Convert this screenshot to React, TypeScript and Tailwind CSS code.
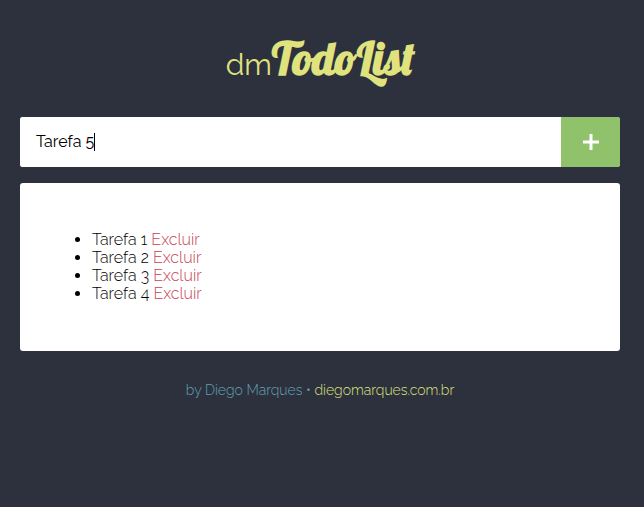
import { useState } from "react";
import type { FormEvent } from "react";

const initialTasks = ["Tarefa 1", "Tarefa 2", "Tarefa 3", "Tarefa 4"];

export default function App() {
  const [tasks, setTasks] = useState<string[]>(initialTasks);
  const [text, setText] = useState("Tarefa 5");

  function addTask(event: FormEvent) {
    event.preventDefault();
    if (!text.trim()) return;
    setTasks([...tasks, text.trim()]);
    setText("");
  }

  return (
    <div className="min-h-screen bg-[#2d313d] pt-8 pr-6 pb-8 pl-5 font-['Raleway',Lato,sans-serif] text-base text-black">
      <header className="flex justify-center">
        <h1 className="flex items-baseline text-[#dfe27d]">
          <span className="text-[30px] leading-none font-normal">dm</span>
          <span className="font-['Lobster','Liberation_Serif',serif] text-[44px] leading-[53px] font-bold">
            TodoList
          </span>
        </h1>
      </header>

      <main className="mt-8">
        <form onSubmit={addTask} className="flex h-[50px] overflow-hidden rounded-[3px] bg-white">
          <div className="relative flex min-w-0 flex-1">
            <input
              type="text"
              aria-label="Nova tarefa"
              value={text}
              onChange={(event) => setText(event.target.value)}
              className="peer min-w-0 flex-1 bg-white px-4 outline-none"
            />
            <span
              aria-hidden="true"
              className="pointer-events-none absolute top-4 left-[74px] h-[18px] w-px bg-black peer-focus:hidden"
            />
          </div>
          <button
            type="submit"
            aria-label="Adicionar tarefa"
            className="flex w-[59px] items-center justify-center bg-[#8fc26b] text-white"
          >
            <svg viewBox="0 0 16 16" className="size-4" fill="currentColor" aria-hidden="true">
              <path d="M6.5 0h3v6.5H16v3H9.5V16h-3V9.5H0v-3h6.5z" />
            </svg>
          </button>
        </form>

        <section className="mt-4 rounded-[3px] bg-white p-8">
          <ul className="my-4 list-disc pl-10 leading-[18px] font-light">
            {tasks.map((task, index) => (
              <li key={index}>
                {task}{" "}
                <a
                  href="#excluir"
                  className="text-[#c83f52]"
                  onClick={(event) => {
                    event.preventDefault();
                    setTasks(tasks.filter((_, position) => position !== index));
                  }}
                >
                  Excluir
                </a>
              </li>
            ))}
          </ul>
        </section>
      </main>

      <footer className="mt-7 text-center text-sm leading-[22px] font-light text-[#5fa3b3]">
        by Diego Marques •{" "}
        <a href="#diegomarques" className="text-[#dfe27d]">
          diegomarques.com.br
        </a>
      </footer>
    </div>
  );
}
